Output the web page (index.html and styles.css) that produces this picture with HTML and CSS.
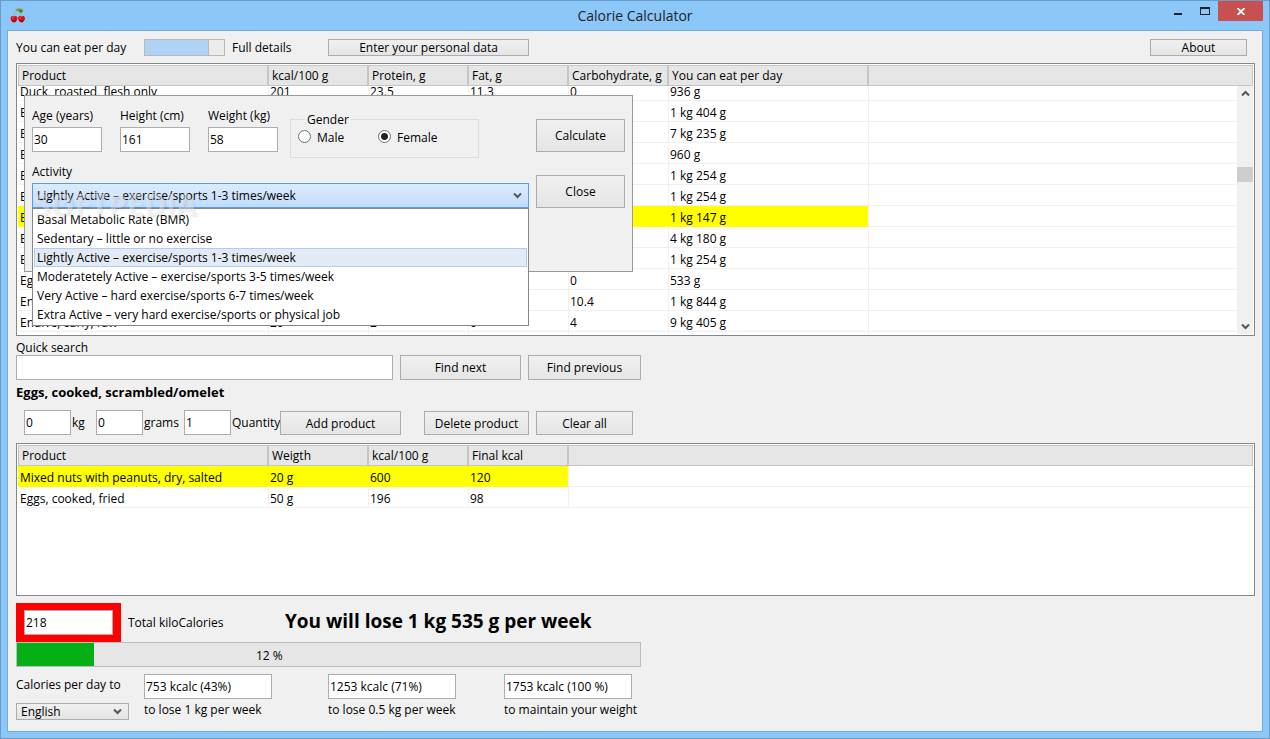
FILE: index.html
```html
<!DOCTYPE html>
<html lang="en">
<head>
<meta charset="utf-8">
<title>Calorie Calculator</title>
<link rel="stylesheet" href="styles.css">
</head>
<body>
<div class="window">
  <header class="titlebar">
    <svg class="app-icon" viewBox="0 0 16 16" width="16" height="16" aria-hidden="true">
      <path d="M5 2C7 0 12 0 13 2C13 5 9 5 8 3Z" fill="#7d9a26"/>
      <path d="M9 2L13 3L11 5Z" fill="#4c6b12"/>
      <path d="M7 3C5 4 4 6 4 8M9 4C10 5 11 6 11 8" fill="none" stroke="#a3b06a"/>
      <path d="M0.500 10C1 7.500 3 7.500 4 8.500C5 7.500 7 7.500 7.500 10C7.500 12.500 5.500 14.500 4 14.500C2.500 14.500 0.500 12.500 0.500 10Z" fill="#d40f12"/>
      <path d="M8 10C8.500 7.500 10.500 7.500 11.500 8.500C12.500 7.500 14.500 7.500 15 10C15 12.500 13 14.500 11.500 14.500C10 14.500 8 12.500 8 10Z" fill="#d40f12"/>
      <path d="M2 12.500Q4 14.500 6 12.500M9.500 12.500Q11.500 14.500 13.500 12.500" fill="none" stroke="#8c0508"/>
      <circle cx="2.800" cy="10" r="0.800" fill="#ff6a5e"/>
      <circle cx="10.300" cy="10" r="0.800" fill="#ff6a5e"/>
    </svg>
    <h1 class="title">Calorie Calculator</h1>
    <div class="controls">
      <button class="control" aria-label="Minimize"><svg width="10" height="10" viewBox="0 0 10 10"><path d="M1 7h8v2H1z" fill="#222"/></svg></button>
      <button class="control" aria-label="Maximize"><svg width="10" height="8" viewBox="0 0 10 8"><path d="M0 0h10v8H0zM1 2v5h8V2z" fill="#222" fill-rule="evenodd"/></svg></button>
      <button class="control control-close" aria-label="Close window"><svg width="8" height="7" viewBox="0 0 8 7"><path d="M0.500 0L7.500 7M7.500 0L0.500 7" stroke="#fff" stroke-width="1.800"/></svg></button>
    </div>
  </header>

  <main class="client">
    <div class="toolbar">
      <span class="toolbar-label">You can eat per day</span>
      <input class="switch" type="checkbox" id="details" checked>
      <label class="details-label" for="details">Full details</label>
      <button class="btn btn-flat btn-personal">Enter your personal data</button>
      <button class="btn btn-flat btn-about">About</button>
    </div>

    <section class="products">
      <div class="list list-products">
        <table class="grid">
          <colgroup><col class="c-name"><col class="c-num"><col class="c-num"><col class="c-num"><col class="c-num"><col class="c-eat"><col></colgroup>
          <thead><tr><th>Product</th><th>kcal/100 g</th><th>Protein, g</th><th>Fat, g</th><th>Carbohydrate, g</th><th>You can eat per day</th><th></th></tr></thead>
          <tbody>
            <tr class="cut"><td><div>Duck, roasted, flesh only</div></td><td><div>201</div></td><td><div>23.5</div></td><td><div>11.3</div></td><td><div>0</div></td><td><div>936 g</div></td><td></td></tr>
            <tr><td>E</td><td></td><td></td><td></td><td></td><td>1 kg 404 g</td><td></td></tr>
            <tr><td>E</td><td></td><td></td><td></td><td></td><td>7 kg 235 g</td><td></td></tr>
            <tr><td>E</td><td></td><td></td><td></td><td></td><td>960 g</td><td></td></tr>
            <tr><td>E</td><td></td><td></td><td></td><td></td><td>1 kg 254 g</td><td></td></tr>
            <tr><td>E</td><td></td><td></td><td></td><td></td><td>1 kg 254 g</td><td></td></tr>
            <tr class="marked"><td>E</td><td></td><td></td><td></td><td></td><td>1 kg 147 g</td><td></td></tr>
            <tr><td>E</td><td></td><td></td><td></td><td></td><td>4 kg 180 g</td><td></td></tr>
            <tr><td>E</td><td></td><td></td><td></td><td></td><td>1 kg 254 g</td><td></td></tr>
            <tr><td>Eg</td><td></td><td></td><td></td><td>0</td><td>533 g</td><td></td></tr>
            <tr><td>En</td><td></td><td></td><td></td><td>10.4</td><td>1 kg 844 g</td><td></td></tr>
            <tr><td>Endive, curly, raw</td><td>20</td><td>2</td><td>0</td><td>4</td><td>9 kg 405 g</td><td></td></tr>
            <tr class="rest"><td></td><td></td><td></td><td></td><td></td><td></td><td></td></tr>
          </tbody>
        </table>
        <div class="scrollbar" aria-hidden="true">
          <svg class="chevron" width="9" height="7" viewBox="0 0 9 7"><path d="M1 5.500L4.500 2L8 5.500"/></svg>
          <div class="thumb"></div>
          <svg class="chevron" width="9" height="7" viewBox="0 0 9 7"><path d="M1 1.500L4.500 5L8 1.500"/></svg>
        </div>
      </div>

      <form class="dialog">
        <div class="dialog-fields">
          <div class="person">
            <div class="field"><label for="age">Age (years)</label><input class="text" id="age" value="30"></div>
            <div class="field"><label for="height">Height (cm)</label><input class="text" id="height" value="161"></div>
            <div class="field"><label for="weight">Weight (kg)</label><input class="text" id="weight" value="58"></div>
            <fieldset class="gender">
              <legend>Gender</legend>
              <label><input type="radio" name="gender">Male</label>
              <label><input type="radio" name="gender" checked>Female</label>
            </fieldset>
          </div>
          <label class="activity-label" for="activity">Activity</label>
          <div class="combo">
            <select class="activity" id="activity"><option>Lightly Active – exercise/sports 1-3 times/week</option></select>
            <svg class="chevron combo-arrow" width="9" height="7" viewBox="0 0 9 7"><path d="M1 1.500L4.500 5L8 1.500"/></svg>
            <ul class="options" role="listbox" aria-label="Activity">
              <li role="option">Basal Metabolic Rate (BMR)</li>
              <li role="option">Sedentary – little or no exercise</li>
              <li role="option" aria-selected="true" class="current">Lightly Active – exercise/sports 1-3 times/week</li>
              <li role="option">Moderatetely Active – exercise/sports 3-5 times/week</li>
              <li role="option">Very Active – hard exercise/sports 6-7 times/week</li>
              <li role="option">Extra Active – very hard exercise/sports or physical job</li>
            </ul>
            <span class="watermark">SOFTPEDIA<sup>°</sup></span>
          </div>
        </div>
        <div class="dialog-buttons">
          <button class="btn" type="button">Calculate</button>
          <button class="btn" type="button">Close</button>
        </div>
      </form>
    </section>

    <label class="search-label" for="search">Quick search</label>
    <div class="search">
      <input class="text" id="search">
      <button class="btn btn-next">Find next</button>
      <button class="btn btn-prev">Find previous</button>
    </div>

    <h2 class="selected">Eggs, cooked, scrambled/omelet</h2>

    <div class="amounts">
      <div class="amount"><input class="text" id="kg" value="0"><label for="kg">kg</label></div>
      <div class="amount amount-grams"><input class="text" id="grams" value="0"><label for="grams">grams</label></div>
      <div class="amount amount-qty"><input class="text" id="qty" value="1"><label for="qty">Quantity</label></div>
      <button class="btn btn-add">Add product</button>
      <button class="btn btn-delete">Delete product</button>
      <button class="btn btn-clear">Clear all</button>
    </div>

    <div class="list list-eaten">
      <table class="grid">
        <colgroup><col class="c-name"><col class="c-num"><col class="c-num"><col class="c-num"><col></colgroup>
        <thead><tr><th>Product</th><th>Weigth</th><th>kcal/100 g</th><th>Final kcal</th><th></th></tr></thead>
        <tbody>
          <tr class="marked"><td>Mixed nuts with peanuts, dry, salted</td><td>20 g</td><td>600</td><td>120</td><td></td></tr>
          <tr><td>Eggs, cooked, fried</td><td>50 g</td><td>196</td><td>98</td><td></td></tr>
        </tbody>
      </table>
    </div>

    <div class="summary">
      <div class="alert"><input class="text" id="total" value="218"></div>
      <label class="total-label" for="total">Total kiloCalories</label>
      <strong class="forecast">You will lose 1 kg 535 g per week</strong>
    </div>
    <div class="progress" role="progressbar" aria-valuenow="12" aria-label="Calories eaten">
      <div class="progress-fill" style="width: 77px"></div>
      <span class="progress-text">12 %</span>
    </div>

    <div class="targets">
      <div class="target-first">
        <span>Calories per day to</span>
        <div class="language-box">
          <select class="language" aria-label="Language"><option>English</option></select>
          <svg class="chevron combo-arrow" width="9" height="7" viewBox="0 0 9 7"><path d="M1 1.500L4.500 5L8 1.500"/></svg>
        </div>
      </div>
      <div class="target"><input class="text" id="t1" value="753 kcalc (43%)"><label for="t1">to lose 1 kg per week</label></div>
      <div class="target"><input class="text" id="t2" value="1253 kcalc (71%)"><label for="t2">to lose 0.5 kg per week</label></div>
      <div class="target"><input class="text" id="t3" value="1753 kcalc (100 %)"><label for="t3">to maintain your weight</label></div>
    </div>
  </main>
</div>
</body>
</html>
```
FILE: styles.css
```css
* { box-sizing: border-box; }
body {
  margin: 0;
  font: 12px/16px "Open Sans", "Noto Sans", sans-serif;
  color: #000;
}
button, input, select { font: inherit; color: inherit; margin: 0; border-radius: 0; }
svg { display: block; }
label, span, h1, h2, strong, th, td, li, legend { white-space: nowrap; }

.window {
  min-height: 100vh;
  display: flex;
  flex-direction: column;
  padding: 0 6px 6px;
  border: 1px solid #6a9ac6;
  background: #8cc7fa;
}

/* Title bar */
.titlebar {
  display: grid;
  grid-template-columns: 1fr auto 1fr;
  height: 29px;
}
.app-icon { margin: 7px 0 0 3px; }
.title { margin: 0; font-size: 14px; font-weight: 400; line-height: 29px; color: #222; }
.controls { display: flex; justify-content: flex-end; align-items: flex-start; }
.control {
  width: 27px;
  height: 20px;
  padding: 0;
  border: 0;
  background: none;
  display: flex;
  align-items: center;
  justify-content: center;
}
.control-close { width: 45px; background: #c75050; }

/* Client area */
.client {
  flex: 1;
  display: flex;
  flex-direction: column;
  padding: 8px 7px 8px 8px;
  border: 1px solid #75abda;
  background: #f0f0f0;
}
.btn {
  height: 25px;
  padding: 0;
  border: 1px solid #acacac;
  background: linear-gradient(#f0f0f0, #e5e5e5);
}
.btn-flat { height: 17px; line-height: 15px; }
.text {
  height: 25px;
  padding: 0 1px;
  border: 1px solid #abadb3;
  background: #fff;
}
.chevron path { fill: none; stroke: #555; stroke-width: 2; }

.toolbar { display: flex; align-items: center; height: 17px; }
.toolbar-label { width: 128px; }
.switch {
  appearance: none;
  width: 81px;
  height: 17px;
  border: 1px solid #b9b9b9;
  background: linear-gradient(90deg, #b0d2f5 63px, #b9b9b9 63px, #b9b9b9 64px, #ebebeb 64px);
}
.details-label { width: 96px; margin-left: 7px; }
.btn-personal { width: 201px; }
.btn-about { width: 97px; margin: 0 8px 0 auto; }

/* Lists */
.list {
  position: relative;
  padding: 1px;
  border: 1px solid #828790;
  background: #fff;
  overflow: hidden;
}
.grid { width: 100%; table-layout: fixed; border-spacing: 0; }
.c-name { width: 250px; }
.c-num { width: 100px; }
.c-eat { width: 200px; }
.grid th {
  height: 21px;
  padding: 0 0 0 3px;
  border: 1px solid #c6c6c6;
  background: #e6e6e6;
  font-weight: 400;
  text-align: left;
  line-height: 19px;
}
.grid td {
  height: 21px;
  padding: 4px 0 0 1px;
  border-left: 1px solid #f0f0f0;
  border-bottom: 1px solid #f0f0f0;
  line-height: 16px;
}
.grid td:first-child { border-left-color: #fff; }
.grid .marked td:not(:last-child) { background: #ff0; border-color: #ff0; }
.grid .cut td { height: 15px; padding-top: 0; }
.cut div { display: flex; align-items: flex-end; height: 14px; overflow: hidden; }
.grid .rest td { height: 2px; padding: 0; border-bottom: 0; line-height: 0; }

.products { position: relative; margin-top: 7px; }
.scrollbar {
  position: absolute;
  top: 22px;
  right: 1px;
  bottom: 1px;
  width: 16px;
  display: flex;
  flex-direction: column;
  align-items: center;
  padding: 4px 0;
  background: #f0f0f0;
}
.thumb { width: 16px; height: 15px; margin: 70px 0 auto; background: #cdcdcd; }
.list-eaten { height: 153px; margin-top: 8px; }

/* Personal data dialog */
.dialog {
  position: absolute;
  top: 32px;
  left: 8px;
  width: 609px;
  height: 177px;
  display: flex;
  justify-content: space-between;
  padding: 12px 7px;
  border: 1px solid #999;
  background: #f0f0f0;
}
.dialog-fields { width: 497px; display: flex; flex-direction: column; }
.person { display: flex; gap: 18px; }
.field { width: 70px; display: flex; flex-direction: column; gap: 3px; }
.gender {
  display: flex;
  width: 189px;
  height: 46px;
  margin: 4px 0 0 -6px;
  padding: 3px 0 0 7px;
  border: 1px solid #dcdcdc;
}
.gender legend { margin-left: 7px; padding: 0 2px; line-height: 15px; }
.gender label { display: flex; align-items: flex-start; gap: 6px; width: 80px; line-height: 16px; }
.gender input {
  appearance: none;
  width: 13px;
  height: 13px;
  border: 1px solid #707070;
  border-radius: 50%;
  background: #fff;
}
.gender input:checked { background: radial-gradient(circle, #222 3px, #fff 4px); }
.activity-label { margin-top: 6px; }
.combo { position: relative; margin-top: 3px; }
.activity {
  appearance: none;
  display: block;
  width: 100%;
  height: 25px;
  padding: 0 4px;
  border: 1px solid #569de5;
  background: linear-gradient(#dcecfc, #c1dcfb);
}
.combo-arrow { position: absolute; top: 9px; right: 7px; }
.options {
  position: absolute;
  top: 25px;
  left: 0;
  width: 100%;
  margin: 0;
  padding: 1px;
  border: 1px solid #828790;
  background: #fff;
  list-style: none;
}
.options li { height: 19px; padding: 0 2px; border: 1px solid transparent; line-height: 17px; }
.options .current { border-color: #b0cdeb; background: #e2ebf5; }
.watermark {
  position: absolute;
  top: 7px;
  left: 2px;
  color: rgba(255, 255, 255, 0.4);
  font-size: 30px;
  font-weight: 700;
  line-height: 30px;
  text-shadow: 1px 1px 2px rgba(0, 0, 0, 0.1);
  pointer-events: none;
}
.watermark sup { font-size: 12px; line-height: 0; }
.dialog-buttons { display: flex; flex-direction: column; gap: 23px; padding-top: 11px; }
.dialog-buttons .btn { width: 89px; height: 33px; }

/* Search */
.search-label { margin-top: 4px; line-height: 15px; }
.search { display: flex; gap: 7px; }
.search .text { width: 377px; }
.btn-next { width: 121px; }
.btn-prev { width: 113px; }
.selected { margin: 3px 0 0; font-size: 13px; line-height: 18px; }

.amounts { display: flex; align-items: flex-end; margin: 9px 0 0 8px; }
.amount { display: flex; align-items: center; gap: 1px; width: 72px; }
.amount .text { width: 47px; }
.amount-grams { width: 88px; }
.amount-qty { width: 96px; }
.amounts .btn { height: 24px; padding-top: 1px; }
.btn-add { width: 121px; }
.btn-delete { width: 105px; margin-left: 23px; }
.btn-clear { width: 97px; margin-left: 7px; }

/* Summary */
.summary { display: flex; align-items: center; height: 39px; margin-top: 7px; }
.alert { width: 105px; height: 39px; padding: 7px 8px; background: #f00; }
.alert .text { display: block; width: 89px; }
.total-label { width: 157px; margin-left: 7px; }
.forecast { font-size: 19px; line-height: 28px; padding-bottom: 3px; }
.progress {
  position: relative;
  width: 625px;
  height: 25px;
  border: 1px solid #bcbcbc;
  background: #e6e6e6;
}
.progress-fill { height: 100%; background: #04b016; }
.progress-text { position: absolute; top: 5px; left: 239px; }

.targets { display: flex; margin-top: 7px; }
.target-first { width: 128px; display: flex; flex-direction: column; gap: 10px; padding-top: 3px; }
.target { display: flex; flex-direction: column; gap: 3px; width: 184px; }
.target + .target + .target { margin-left: -8px; }
.target .text { width: 128px; }
.language-box { position: relative; width: 113px; }
.language {
  appearance: none;
  display: block;
  width: 100%;
  height: 17px;
  padding: 0 4px;
  border: 1px solid #acacac;
  background: linear-gradient(#f0f0f0, #e5e5e5);
  line-height: 15px;
}
.language-box .combo-arrow { top: 5px; }
```
